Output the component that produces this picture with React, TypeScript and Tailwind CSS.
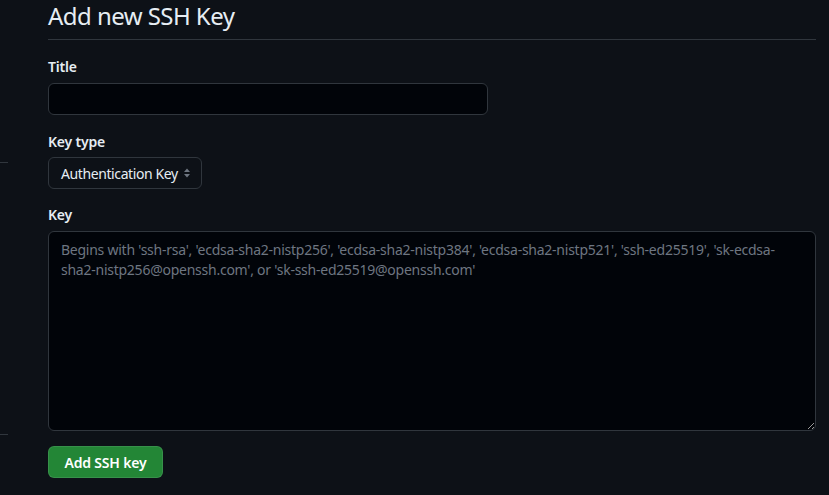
import React from "react";

export default function App() {
  const font = { fontFamily: '"Noto Sans", "Liberation Sans", sans-serif' };
  return (
    <div className="min-h-[495px] w-full bg-[#0d1117] text-[#e6edf3]" style={font}>
      <div className="flex">
        <aside className="w-[8px] shrink-0">
          <div className="h-[163px] border-b border-[#30363d]" />
          <div className="h-[272px] border-b border-[#30363d]" />
        </aside>
        <main className="ml-[40px] w-[768px] pt-[1px]">
          <div className="border-b border-[#30363d] pb-[8px]">
            <h2 className="text-[24px] font-normal leading-[30px] tracking-[-0.55px]">Add new SSH Key</h2>
          </div>
          <form className="flex flex-col" onSubmit={(e) => e.preventDefault()}>
            <label className="mt-[17px] mb-[6px] block text-[14px] font-semibold leading-[20px] tracking-[-0.2px]">Title</label>
            <input
              type="text"
              className="h-[32px] w-[440px] rounded-[6px] border border-[#30363d] bg-[#010409] px-[12px] text-[14px] text-[#e6edf3] outline-none"
            />
            <label className="mt-[17px] mb-[5px] block text-[14px] font-semibold leading-[20px] tracking-[-0.2px]">Key type</label>
            <div className="flex h-[32px] w-[154px] items-center justify-between whitespace-nowrap rounded-[6px] border border-[#30363d] bg-[#0d1117] pl-[12px] pr-[10px] text-[14px] tracking-[-0.4px]">
              <span>Authentication Key</span>
              <svg width="8" height="12" viewBox="0 0 8 12" className="shrink-0">
                <path d="M4 1.5 L7 5 L1 5 Z" fill="#6e7681" />
                <path d="M4 10.5 L7 7 L1 7 Z" fill="#6e7681" />
              </svg>
            </div>
            <label className="mt-[16px] mb-[6px] block text-[14px] font-semibold leading-[20px] tracking-[-0.2px]">Key</label>
            <textarea
              className="h-[200px] w-[768px] resize-y rounded-[6px] border border-[#30363d] bg-[#010409] px-[12px] pt-[8px] pb-[6px] text-[14px] leading-[20px] tracking-[-0.25px] text-[#e6edf3] outline-none placeholder:text-[#6e7681]"
              placeholder="Begins with 'ssh-rsa', 'ecdsa-sha2-nistp256', 'ecdsa-sha2-nistp384', 'ecdsa-sha2-nistp521', 'ssh-ed25519', 'sk-ecdsa-sha2-nistp256@openssh.com', or 'sk-ssh-ed25519@openssh.com'"
            />
            <div className="mt-[15px]">
              <button
                type="submit"
                className="h-[32px] w-[115px] rounded-[6px] border border-[rgba(240,246,252,0.1)] bg-[#238636] text-[14px] font-semibold tracking-[-0.2px] text-white"
              >
                Add SSH key
              </button>
            </div>
          </form>
        </main>
      </div>
    </div>
  );
}
